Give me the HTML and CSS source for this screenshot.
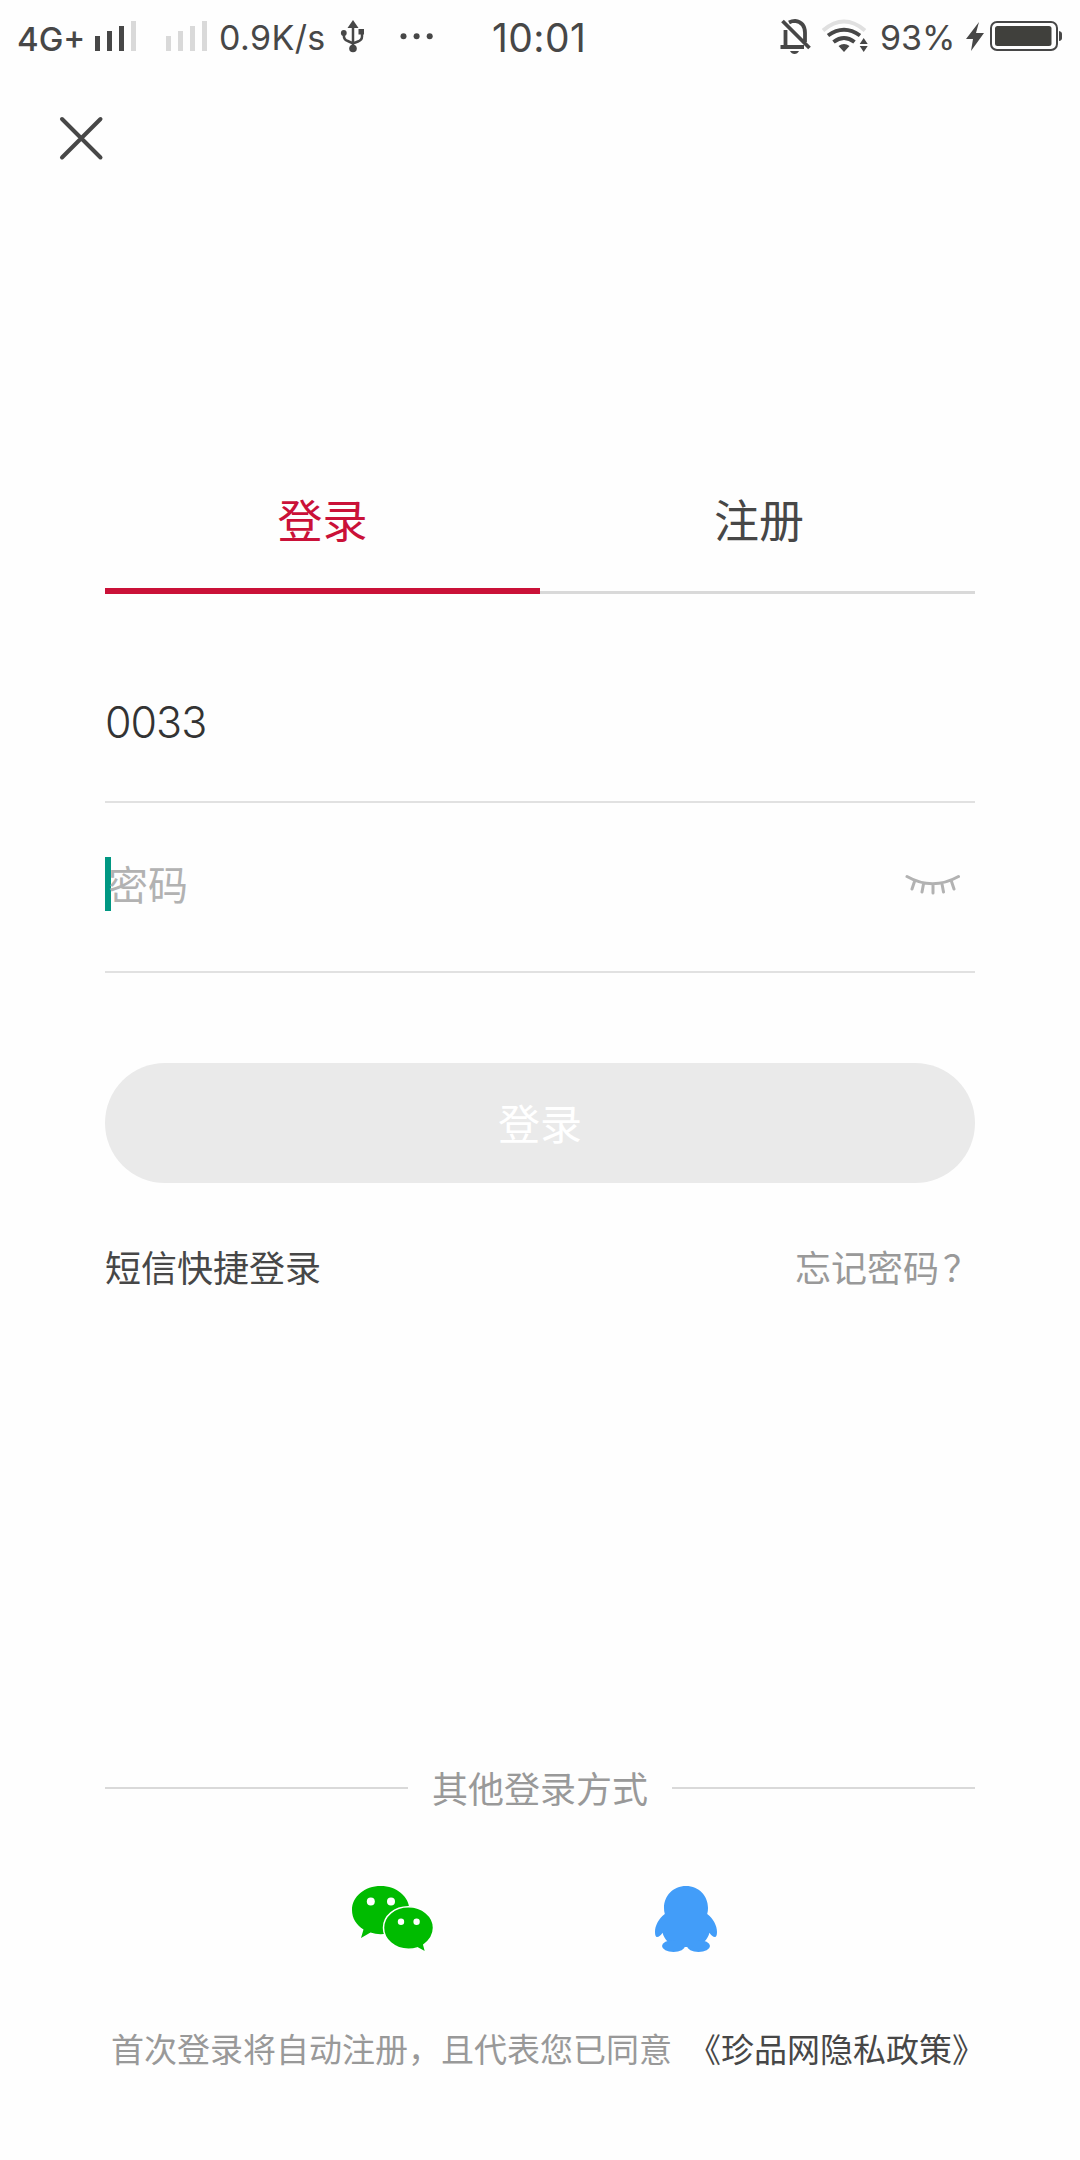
FILE: index.html
```html
<!DOCTYPE html>
<html lang="zh-CN">
<head>
<meta charset="utf-8">
<title>登录</title>
<link rel="stylesheet" href="styles.css">
</head>
<body>
<div class="screen">
  <div class="status">
    <span class="network">4G+</span>
    <svg class="signal" width="42" height="80" viewBox="95 0 42 80"><path fill="#474747" d="M95 36h5v15h-5zM107 31h5v20h-5zM119 26h5v25h-5z"/><path fill="#d9d9d9" d="M131 21h5v30h-5z"/></svg>
    <svg class="signal-off" width="42" height="80" viewBox="166 0 42 80"><path fill="#d9d9d9" d="M166 36h5v15h-5zM178 31h5v20h-5zM190 26h5v25h-5zM202 21h5v30h-5z"/></svg>
    <span class="speed">0.9K/s</span>
    <svg class="usb" width="26" height="80" viewBox="340 0 26 80"><g fill="#474747"><path d="M353 20l5.500 8h-11z"/><circle cx="353" cy="48.500" r="3.800"/><circle cx="343.800" cy="33" r="2.900"/><path d="M358.500 29h5.500v5.500h-5.500z"/></g><path fill="none" stroke="#474747" stroke-width="2.500" d="M353 27v21M343.800 33v2q0 5 4 6l5.200 2.500 5-2q4-1.500 4-5v-3"/></svg>
    <svg class="dots" width="34" height="80" viewBox="400 0 34 80"><g fill="#474747"><circle cx="403.500" cy="36.300" r="3"/><circle cx="416.600" cy="36.300" r="3"/><circle cx="429.700" cy="36.300" r="3"/></g></svg>
    <span class="clock">10:01</span>
    <svg class="bell" width="32" height="80" viewBox="780 0 32 80"><path fill="none" stroke="#474747" stroke-width="3.800" d="M785.500 47V30M789 22.500Q792 20.800 795 20.800q10 1.500 10 12V42M780.500 47H804M782.500 21L809.500 48"/><path fill="#474747" d="M790 51h9q-1.500 3-4.500 3t-4.500-3z"/></svg>
    <svg class="wifi" width="47" height="80" viewBox="822 0 47 80"><g fill="none" stroke-width="4"><path stroke="#e0e0e0" d="M823 30.500Q844 12.500 865 30.500"/><path stroke="#474747" d="M828 35.500Q844 24 860 35.500M833.500 42Q844 34 854.500 42"/></g><path fill="#474747" d="M838.500 46Q844 42 849.500 46L844 52zM863.700 38l4 6h-8zM859.700 46h8l-4 6z"/></svg>
    <span class="percent">93%</span>
    <svg class="bolt" width="18" height="80" viewBox="966 0 18 80"><path fill="#474747" d="M979 22L966 39h7l-2 12 13-18h-8z"/></svg>
    <svg class="battery" width="73" height="80" viewBox="990 0 73 80"><rect x="991" y="22" width="66" height="28" rx="6" fill="none" stroke="#474747" stroke-width="2"/><rect x="995" y="26" width="56.500" height="20" rx="2.500" fill="#40403c"/><path fill="#474747" d="M1059 31q3 .5 3 3v4q0 2.500-3 3z"/></svg>
  </div>
  <div class="topbar">
    <svg width="46" height="46" viewBox="58 115 46 46"><path fill="none" stroke="#474747" stroke-width="4" stroke-linecap="round" d="M62 119l38.500 38.500M100.500 119L62 157.500"/></svg>
  </div>
  <div class="tabs">
    <div class="tab active">登录</div>
    <div class="tab">注册</div>
  </div>
  <div class="field account">0033</div>
  <div class="field password">
    <span class="hint">密码</span>
    <svg width="56" height="24" viewBox="905 872 56 24"><path fill="none" stroke="#b2b2b2" stroke-width="3" stroke-linecap="round" d="M907 876.500Q932.500 891 958.500 876.500M914.500 881.500L912 889M923.500 884L922 892M933 884.500V893M942 884L943.500 892M951.500 881.500L954 889"/></svg>
  </div>
  <div class="submit">登录</div>
  <div class="links"><span>短信快捷登录</span><span class="forgot">忘记密码<span class="mark">？</span></span></div>
  <div class="divider"><span>其他登录方式</span></div>
  <div class="social">
    <svg width="83" height="68" viewBox="351 1885 83 68"><g fill="#0b0"><path d="M380.700 1886c-16 0-28.700 10.500-28.700 24 0 8.500 4.500 15 11.500 19.500l-2.500 8.500 9.500-5.500q5 1.700 10.200 1.700c16 0 28.700-10.700 28.700-24.200S396.500 1886 380.700 1886z"/><path stroke="#fff" stroke-width="1.500" d="M408.500 1906.800c-14 0-25 9.300-25 21s11 21.500 25 21.500q5 0 8.800-1.400l8.500 4.500-2-7.600c6-4.300 9.700-10 9.700-17 0-11.700-11.300-21-25-21z"/></g><g fill="#fff"><circle cx="370.800" cy="1901.600" r="4"/><circle cx="391" cy="1901.600" r="4"/><circle cx="401" cy="1921.800" r="3.200"/><circle cx="416.600" cy="1921.800" r="3.200"/></g></svg>
    <svg class="qq" width="64" height="68" viewBox="654 1885 64 68"><g fill="#429df9"><path d="M686 1886c-13 0-22 10-22 22 0 2 .2 4 .8 6-6 4.500-9.800 11.500-9.800 18 0 3.500.8 5 2 5 2 0 4-2 5.500-4.300 1 3.500 2.500 6 4.500 8.300h38c2-2.300 3.500-4.800 4.500-8.300 1.500 2.300 3.500 4.300 5.500 4.300 1.200 0 2-1.500 2-5 0-6.500-3.800-13.500-9.800-18 .6-2 .8-4 .8-6 0-12-9-22-22-22z"/><ellipse cx="673.500" cy="1946" rx="11.500" ry="6"/><ellipse cx="698.500" cy="1946" rx="11.500" ry="6"/><path d="M672 1937h28l-10 10h-8z"/></g></svg>
  </div>
  <div class="terms"><span>首次登录将自动注册，且代表您已同意</span><span class="policy">《珍品网隐私政策》</span></div>
</div>
</body>
</html>
```
FILE: styles.css
```css
* { box-sizing: border-box; }
body { margin: 0; background: #fefefe; }
svg { display: block; flex: none; }
.screen {
  width: 1080px; height: 2160px; overflow: hidden;
  display: flex; flex-direction: column;
  background: #fefefe; color: #474747;
  font-family: "Noto Sans CJK SC", sans-serif;
  white-space: nowrap;
}
.status { display: flex; height: 80px; flex: none; font-family: Inter, "Liberation Sans", sans-serif; line-height: 75px; }
.status span { flex: none; }
.network { width: 78px; padding-left: 17px; font-size: 33px; font-weight: 500; line-height: 79px; }
.signal { margin-left: 17px; }
.signal-off { margin-left: 29px; }
.speed { width: 121px; padding-left: 11px; font-size: 34px; letter-spacing: 0.4px; }
.usb { margin-left: 11px; }
.dots { margin-left: 34px; }
.clock { width: 151px; padding-left: 58px; font-size: 39px; letter-spacing: 0.4px; }
.bell { margin-left: 195px; }
.wifi { margin-left: 10px; }
.percent { width: 97px; padding-left: 11px; font-size: 34px; }
.battery { margin-left: 6px; }
.topbar { height: 385px; padding: 35px 58px 0; flex: none; }
.tabs { display: flex; height: 129px; margin: 0 105px; flex: none; }
.tab { flex: 1; border-bottom: 3px solid #d9d9d9; text-align: center; text-indent: 3px; font-size: 45px; line-height: 107px; }
.tab.active { border-bottom: 6px solid #ca1138; color: #ca1138; text-indent: 0; }
.field { margin: 0 105px; flex: none; border-bottom: 2px solid #e1e1e1; }
.account { height: 209px; padding-top: 98px; font: 350 43px/61px Inter, "Liberation Sans", sans-serif; color: #333; letter-spacing: -1px; }
.password { display: flex; height: 170px; padding: 54px 14px 0 0; justify-content: space-between; }
.hint { height: 54px; border-left: 6px solid #009782; font-size: 40px; line-height: 53px; color: #b2b2b2; text-indent: -3px; }
.password svg { margin-top: 15px; }
.submit { height: 120px; margin: 90px 105px 0; flex: none; border-radius: 60px; background: #eaeaea; color: #fff; font-size: 42px; line-height: 118px; text-align: center; }
.links { display: flex; justify-content: space-between; height: 60px; margin: 54px 105px 0; flex: none; font-size: 36px; line-height: 58px; }
.forgot, .divider, .terms { color: #999; }
.mark { display: inline-block; width: 36px; text-indent: 4px; }
.divider { display: flex; align-items: center; gap: 24px; height: 60px; margin: 461px 105px 0; flex: none; font-size: 36px; line-height: 58px; }
.divider span { height: 60px; }
.divider::before, .divider::after { content: ""; flex: 1; height: 2px; background: #d9d9d9; }
.social { display: flex; height: 68px; margin: 67px 0 0 351px; flex: none; }
.qq { margin-left: 220px; }
.terms { display: flex; gap: 16px; height: 60px; margin: 66px 0 0 111px; flex: none; font-size: 33px; line-height: 58px; }
.policy { color: #474747; }
```
